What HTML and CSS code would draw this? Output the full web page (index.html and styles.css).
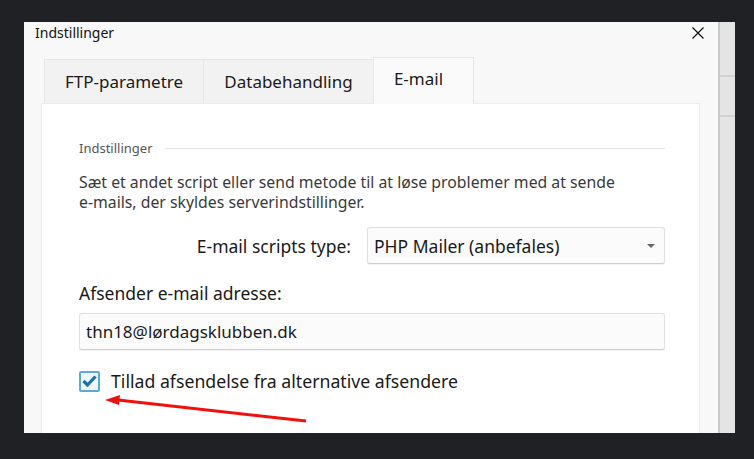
FILE: index.html
```html
<!DOCTYPE html>
<html lang="da">
<head>
<meta charset="utf-8">
<link rel="stylesheet" href="styles.css">
</head>
<body>
<div class="desk">
  <div class="dialog">
    <div class="titlebar">
      <span class="title">Indstillinger</span>
      <svg class="close" width="12" height="12" viewBox="0 0 12 12"><path d="M0.5 0.5 L11.5 11.5 M11.5 0.5 L0.5 11.5" stroke="#111" stroke-width="1.2" fill="none"/></svg>
    </div>
    <div class="tabs">
      <div class="tab tab-ftp">FTP-parametre</div>
      <div class="tab tab-db">Databehandling</div>
      <div class="tab active">E-mail</div>
    </div>
    <div class="panel">
      <div class="group-head"><span>Indstillinger</span><span class="rule"></span></div>
      <p class="desc">Sæt et andet script eller send metode til at løse problemer med at sende <span class="nowrap">e-mails,</span> der skyldes serverindstillinger.</p>
      <div class="row">
        <label class="row-label">E-mail scripts type:</label>
        <div class="select"><span>PHP Mailer (anbefales)</span><span class="caret"></span></div>
      </div>
      <div class="field-label">Afsender e-mail adresse:</div>
      <div class="input">thn18@lørdagsklubben.dk</div>
      <div class="check-row">
        <span class="checkbox"><svg width="15" height="13" viewBox="0 0 15 13"><path d="M1.5 6 L5.5 10 L13.5 1.5" stroke="#1d72a6" stroke-width="3.2" fill="none"/></svg></span>
        <span class="check-label">Tillad afsendelse fra alternative afsendere</span>
      </div>
    </div>
    <svg class="arrow" width="220" height="40" viewBox="0 0 220 40"><path d="M202 33 L14 12" stroke="#f01010" stroke-width="3" fill="none"/><path d="M1 12 L16 7 L15 17 Z" fill="#f01010"/></svg>
  </div>
  <div class="behind">
    <div class="behind-cell"></div>
    <div class="behind-cell"></div>
    <div class="behind-rest"></div>
  </div>
</div>
</body>
</html>
```

FILE: styles.css
```css
html, body {
  margin: 0;
  padding: 0;
  background: #1f2125;
  font-family: "Noto Sans", "Open Sans", sans-serif;
  color: #1b1b1b;
}
.desk {
  display: flex;
  padding: 22px 0 0 24px;
  height: 411px;
}
.dialog {
  position: relative;
  width: 694px;
  height: 411px;
  background: #f8f8f8;
  overflow: hidden;
  display: flex;
  flex-direction: column;
}
.titlebar {
  height: 35px;
  display: flex;
  align-items: flex-start;
  justify-content: space-between;
  padding: 0 14px 0 11px;
}
.title {
  font-size: 14px;
  margin-top: 1px;
  color: #111;
}
.close {
  margin-top: 5px;
}
.tabs {
  display: flex;
  align-items: flex-end;
  margin-left: 20px;
  height: 46px;
}
.tab {
  height: 44px;
  box-sizing: border-box;
  display: flex;
  align-items: center;
  justify-content: center;
  font-size: 17px;
  background: #f2f2f2;
  border: 1px solid #e6e6e6;
  border-bottom: none;
  border-right: none;
  color: #1a1a1a;
}
.tab-ftp { width: 159px; }
.tab-db { width: 170px; }
.tab.active {
  width: 101px;
  background: #fafafa;
  border-right: 1px solid #e6e6e6;
  padding: 0 10px 6px 0;
  position: relative;
  z-index: 1;
  margin-bottom: -1px;
  height: 47px;
}
.panel {
  margin-left: 17px;
  width: 659px;
  flex: 1;
  background: #fff;
  border: 1px solid #ececec;
  border-bottom: none;
  box-sizing: border-box;
  padding: 34px 34px 0 37px;
}
.group-head {
  display: flex;
  align-items: center;
  gap: 12px;
  font-size: 13px;
  color: #555;
  height: 20px;
}
.group-head .rule {
  flex: 1;
  height: 1px;
  background: #e3e3e3;
}
.desc {
  margin: 14px 0 0 0;
  max-width: 560px;
  font-size: 15.8px;
  line-height: 20px;
  color: #3a3a3a;
}
.nowrap {
  white-space: nowrap;
}
.row {
  display: grid;
  grid-template-columns: 1fr 298px;
  column-gap: 16px;
  align-items: center;
  margin-top: 15px;
}
.row-label {
  text-align: right;
  font-size: 17.5px;
  color: #1a1a1a;
}
.select, .input {
  height: 37px;
  box-sizing: border-box;
  border: 1px solid #e0e0e0;
  border-bottom-color: #cfcfcf;
  border-radius: 3px;
  background: #fbfbfb;
  display: flex;
  align-items: center;
  color: #1a1a1a;
  box-shadow: 0 1px 1px rgba(0,0,0,0.06);
}
.select {
  justify-content: space-between;
  padding: 0 9px 0 6px;
  font-size: 17.5px;
}
.caret {
  width: 0;
  height: 0;
  border-left: 4px solid transparent;
  border-right: 4px solid transparent;
  border-top: 4px solid #666;
}
.field-label {
  margin-top: 17px;
  font-size: 17.5px;
  color: #1a1a1a;
  line-height: 24px;
}
.input {
  margin-top: 8px;
  padding: 0 6px;
  font-size: 17px;
}
.check-row {
  display: flex;
  align-items: center;
  gap: 11px;
  margin-top: 19px;
}
.checkbox {
  width: 21px;
  height: 21px;
  box-sizing: border-box;
  border: 2px solid #5aaad2;
  border-radius: 2px;
  background: #eef6fb;
  display: flex;
  align-items: center;
  justify-content: center;
}
.check-label {
  font-size: 17.7px;
  color: #1a1a1a;
}
.arrow {
  position: absolute;
  left: 80px;
  top: 366px;
}
.behind {
  width: 17px;
  height: 411px;
  background: #e4e4e4;
  border-left: 2px solid #c9c9c9;
  box-sizing: border-box;
  display: flex;
  flex-direction: column;
}
.behind-cell {
  height: 38px;
  border-bottom: 2px solid #d2d2d2;
}
.behind-cell:first-child {
  height: 53px;
}
```
